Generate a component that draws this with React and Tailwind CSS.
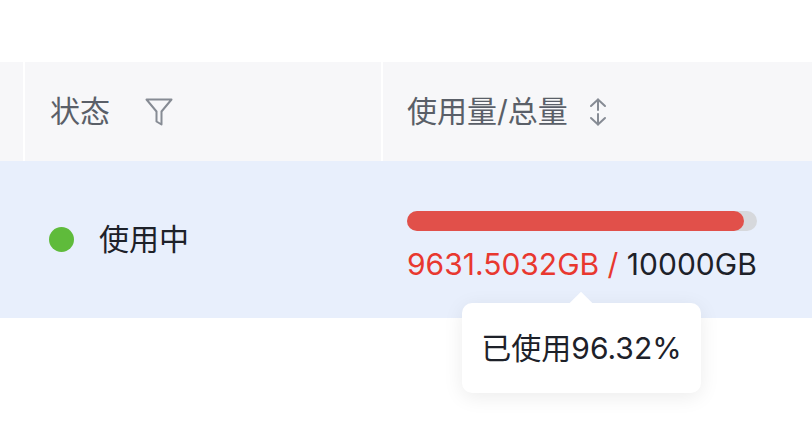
import React from "react";

function FilterIcon() {
  return (
    <svg width="28" height="28" viewBox="0 0 28 28" fill="none" stroke="#868b94" strokeWidth="2" strokeLinejoin="round">
      <path d="M1.5 1.5 H26.5 L16.5 13.5 V26.5 L11.5 23.5 V13.5 Z" />
    </svg>
  );
}

function SortIcon() {
  return (
    <svg width="20" height="28" viewBox="0 0 20 28" fill="none" stroke="#868b94" strokeWidth="2" strokeLinecap="round" strokeLinejoin="round">
      <path d="M10 1.5 V12" />
      <path d="M3 8 L10 1.5 L17 8" />
      <path d="M10 16 V26.5" />
      <path d="M3 20 L10 26.5 L17 20" />
    </svg>
  );
}

export default function App() {
  const font = { fontFamily: '"Inter", "Noto Sans CJK SC", sans-serif' };
  return (
    <div className="w-[812px] h-[428px] bg-white relative overflow-hidden" style={font}>
      <div className="h-[62px]" />
      {/* header */}
      <div className="flex h-[99px] bg-[#f7f7f9]">
        <div className="w-[23px]" />
        <div className="w-[2px] bg-white" />
        <div className="w-[356px] pl-[25px] flex items-center gap-[35px] text-[30px] text-[#5a5f68]">
          <span>状态</span>
          <FilterIcon />
        </div>
        <div className="w-[2px] bg-white" />
        <div className="flex-1 pl-[24px] flex items-center gap-[20px] text-[30px] text-[#5a5f68]">
          <span>使用量/总量</span>
          <SortIcon />
        </div>
      </div>
      {/* row */}
      <div className="flex h-[157px] bg-[#e8effc]">
        <div className="w-[25px]" />
        <div className="w-[358px] pl-[24px] flex items-center gap-[25px]">
          <div className="w-[25px] h-[25px] rounded-full bg-[#5fbb3b]" />
          <span className="text-[30px] text-[#1d2129]">使用中</span>
        </div>
        <div className="flex-1 pl-[24px] pt-[50px]">
          <div className="w-[350px] h-[20px] rounded-full bg-[#d6d8dc]">
            <div className="h-full rounded-full bg-[#e1504a]" style={{ width: "96.32%" }} />
          </div>
          <div className="mt-[13px] text-[30px] leading-[40px] whitespace-nowrap">
            <span className="text-[#e8382f]">9631.5032GB / </span>
            <span className="text-[#1d2129]">10000GB</span>
          </div>
        </div>
      </div>
      {/* tooltip */}
      <div className="absolute left-[462px] top-[303px] w-[239px] h-[90px] bg-white rounded-[10px] shadow-[0_4px_20px_rgba(0,0,0,0.08)] flex items-center justify-center">
        <div className="absolute left-[111px] top-[-8px] w-[16px] h-[16px] bg-white rotate-45" />
        <span className="relative text-[30px] text-[#1d2129]">已使用96.32%</span>
      </div>
    </div>
  );
}
